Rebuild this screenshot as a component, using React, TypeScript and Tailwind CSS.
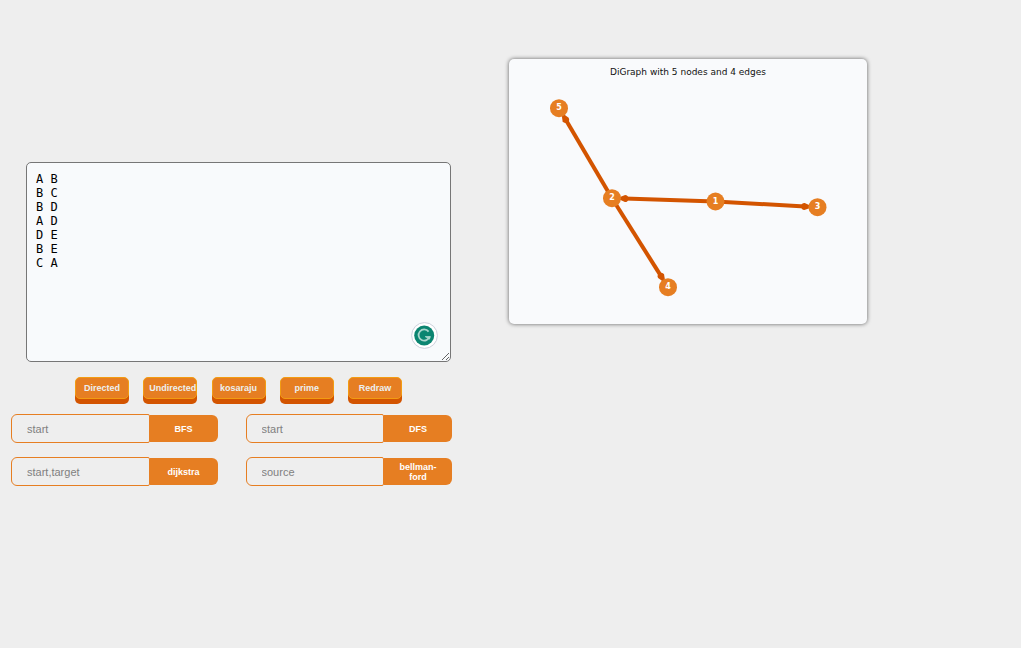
import React from "react";

const SAMPLE = ["A B", "B C", "B D", "A D", "D E", "B E", "C A"].join("\n");

const ACTIONS = ["Directed", "Undirected", "kosaraju", "prime", "Redraw"];

const QUERIES = [
  { id: "bfs", placeholder: "start", action: "BFS" },
  { id: "dfs", placeholder: "start", action: "DFS" },
  { id: "dijkstra", placeholder: "start,target", action: "dijkstra" },
  { id: "bellman-ford", placeholder: "source", action: "bellman-ford" },
];

type Point = { x: number; y: number };

const NODES: Record<string, Point> = {
  "1": { x: 206.5, y: 142.5 },
  "2": { x: 103, y: 139.2 },
  "3": { x: 308.5, y: 148.2 },
  "4": { x: 159, y: 228.2 },
  "5": { x: 50, y: 49.2 },
};

const EDGES: [string, string][] = [
  ["1", "2"],
  ["1", "3"],
  ["2", "4"],
  ["2", "5"],
];

function Edge({ from, to }: { from: Point; to: Point }) {
  const length = Math.hypot(to.x - from.x, to.y - from.y);
  const angle = (Math.atan2(to.y - from.y, to.x - from.x) * 180) / Math.PI;
  const tip = length - 8.5;
  return (
    <g transform={`translate(${from.x} ${from.y}) rotate(${angle})`} fill="#d35400">
      <rect x="0" y="-2" width={tip - 4} height="4" />
      <path
        d={`M${tip + 0.5} -1.4 L${tip - 4.5} -3.5 Q${tip - 7.5} -3.6 ${tip - 8} 0 Q${tip - 7.5} 3.6 ${tip - 4.5} 3.5 L${tip + 0.5} 1.4 Z`}
      />
    </g>
  );
}

function Graph() {
  return (
    <figure className="w-[358px] max-w-full rounded-[5px] bg-[#f9fafc] shadow-[0_0_4px_rgba(0,0,0,0.6)]">
      <svg viewBox="0 0 358 265" className="block w-full" role="img" aria-label="DiGraph with 5 nodes and 4 edges">
        <text x="179" y="16" textAnchor="middle" fontSize="9" fill="#111" className="font-['DejaVu_Sans',sans-serif]">
          DiGraph with 5 nodes and 4 edges
        </text>
        {EDGES.map(([a, b]) => (
          <Edge key={a + b} from={NODES[a]} to={NODES[b]} />
        ))}
        {Object.entries(NODES).map(([name, p]) => (
          <g key={name}>
            <circle cx={p.x} cy={p.y} r="9" fill="#e67e22" />
            <text
              x={p.x}
              y={p.y + 2}
              textAnchor="middle"
              fontSize="8"
              fontWeight="bold"
              fill="#fff"
              className="font-['DejaVu_Sans',sans-serif]"
            >
              {name}
            </text>
          </g>
        ))}
      </svg>
    </figure>
  );
}

export default function App() {
  return (
    <main className="grid min-h-screen grid-cols-[452fr_569fr] items-start bg-[#eeeeee] font-['Liberation_Sans',Arial,sans-serif]">
      <section className="pt-[162px] pl-[11px]">
        <div className="pl-[15px] pr-px">
          <div className="relative">
            <textarea
              aria-label="Edge list"
              defaultValue={SAMPLE}
              spellCheck={false}
              className="block h-[200px] w-full resize rounded-[5px] border border-[#767676] bg-[#f8fafc] p-[9px] font-['DejaVu_Sans_Mono',monospace] text-[12px] leading-[14px] text-black outline-none"
            />
            <button
              type="button"
              aria-label="Writing assistant"
              className="absolute right-[13px] bottom-[13px] size-[27px]"
            >
              <svg viewBox="0 0 27 27" className="block size-full" fill="none">
                <circle cx="13.5" cy="13.5" r="12.9" fill="#fff" stroke="#ccd0dc" />
                <circle cx="13.2" cy="13.5" r="10" fill="#0b8571" />
                <path d="M17.6 9.6 A5.6 5.6 0 1 0 18.6 14.5" stroke="#a9d6cd" strokeWidth="1.8" />
                <path d="M14.2 14.6 H19.4 L18.4 17.2 Z" fill="#a9d6cd" stroke="#a9d6cd" strokeWidth="0.8" />
              </svg>
            </button>
          </div>
          <div className="mt-[15px] flex justify-between px-[49px]">
            {ACTIONS.map((name) => (
              <button
                key={name}
                type="button"
                className="mb-[5px] h-[22px] w-[54px] rounded-[5px] border border-[#f39c12] bg-[#e67e22] px-[5px] pt-px text-center text-[9px] font-bold whitespace-nowrap text-[#ecf0f1] shadow-[0_5px_0_#d35400]"
              >
                {name}
              </button>
            ))}
          </div>
        </div>
        <div className="mt-[10px] grid grid-cols-2 gap-x-7 gap-y-[14px]">
          {QUERIES.map((q) => (
            <form key={q.id} className="flex items-center" onSubmit={(e) => e.preventDefault()}>
              <input
                id={q.id}
                type="text"
                aria-label={`${q.action} ${q.placeholder}`}
                placeholder={q.placeholder}
                className="h-[29px] min-w-0 flex-1 rounded-l-[6px] rounded-r-[2px] border border-[#e67e22] bg-transparent px-[15px] text-[11px] text-[#333] outline-none placeholder:text-[#808080]"
              />
              <button
                type="submit"
                className="h-[27px] w-[68px] rounded-r-[6px] bg-[#e67e22] px-2 text-[9px] leading-[10px] font-bold text-white"
              >
                {q.action}
              </button>
            </form>
          ))}
        </div>
      </section>
      <section className="pt-[59px] pl-[57px]">
        <Graph />
      </section>
    </main>
  );
}
